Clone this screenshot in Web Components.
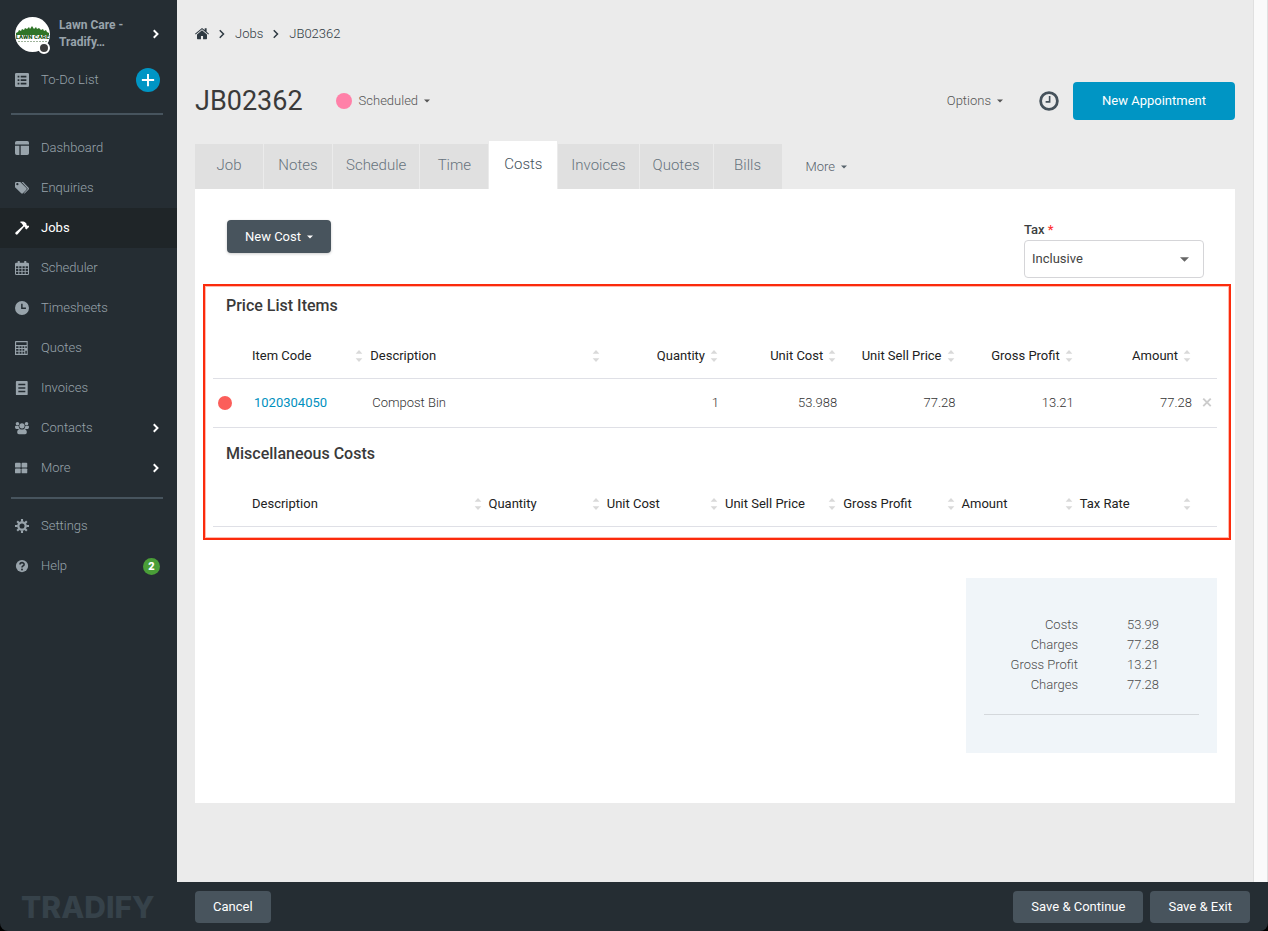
<!DOCTYPE html>
<html lang="en">
<head>
<meta charset="utf-8">
<meta name="viewport" content="width=device-width, initial-scale=1">
<title>JB02362 - Costs</title>
<style>
  html {
    background: #000;
  }

  body {
    margin: 0;
    font: 300 13px/20px Roboto, sans-serif;
    color: #3c3f41;
  }
</style>
</head>
<body>

<app-shell>
  <side-nav slot="nav">
    <account-card slot="account" name="Lawn Care - Tradify…"></account-card>
    <nav-item slot="todo" icon="list" add>To-Do List</nav-item>

    <nav-item icon="dashboard">Dashboard</nav-item>
    <nav-item icon="tags">Enquiries</nav-item>
    <nav-item icon="hammer" active>Jobs</nav-item>
    <nav-item icon="calendar">Scheduler</nav-item>
    <nav-item icon="clock">Timesheets</nav-item>
    <nav-item icon="calculator">Quotes</nav-item>
    <nav-item icon="invoice">Invoices</nav-item>
    <nav-item icon="people" expandable>Contacts</nav-item>
    <nav-item icon="tiles" expandable>More</nav-item>

    <nav-item slot="support" icon="gear">Settings</nav-item>
    <nav-item slot="support" icon="help" badge="2">Help</nav-item>
  </side-nav>

  <bread-crumbs><a href="#jobs">Jobs</a><a href="#JB02362">JB02362</a></bread-crumbs>

  <job-header status="Scheduled">JB02362</job-header>

  <tab-bar tabs="Job,Notes,Schedule,Time,Costs,Invoices,Quotes,Bills" selected="Costs"></tab-bar>

  <costs-panel>
    <cost-table id="price-list"></cost-table>
    <cost-table id="misc-costs"></cost-table>
    <totals-box slot="totals"></totals-box>
  </costs-panel>

  <action-bar slot="footer">
    <app-button>Cancel</app-button>
    <app-button slot="end">Save &amp; Continue</app-button>
    <app-button slot="end">Save &amp; Exit</app-button>
  </action-bar>
</app-shell>

<script>
// All icons share a 16x16 box and take the text colour.
const ICONS = {
  list: `<path fill-rule="evenodd" d="M1.500 0h13A1.500 1.500 0 0 1 16 1.500v13a1.500 1.500 0 0 1-1.500 1.500h-13A1.500 1.500 0 0 1 0 14.500v-13A1.500 1.500 0 0 1 1.500 0zM3 3v2h2V3zm3.500 0v2H13V3zM3 7v2h2V7zm3.500 0v2H13V7zM3 11v2h2v-2zm3.500 0v2H13v-2z"/>`,
  dashboard: `<path d="M2 0h12a2 2 0 0 1 2 2v2H0V2a2 2 0 0 1 2-2zM0 5.500h5V16H2a2 2 0 0 1-2-2zM6.500 5.500H16V14a2 2 0 0 1-2 2H6.500z"/>`,
  tags: `<path fill-rule="evenodd" d="M0 2.500C0 1.700.7 1 1.500 1H6l7 7c.6.600.6 1.300 0 1.900L9 14c-.6.600-1.300.6-1.900 0L0 7zm2.700-.2a1.300 1.300 0 1 0 0 2.600 1.300 1.300 0 0 0 0-2.600z"/><path d="M7.500 1h1.700l6.400 6.800c.5.600.5 1.300 0 1.900L11.300 14c-.5.500-1 .5-1.500.2l4.500-4.700c.3-.3.3-.7 0-1z"/>`,
  hammer: `<path d="M5.500 1.200C8 .2 10.700.6 12.400 2.300l.8.900-.1 1.400 1 .9 1.900-.2v1.600l-3 2.900-1.300-1.300v-1L10.500 6.400 3 15.100c-.6.700-1.400.7-2 .1l-.3-.3c-.6-.6-.6-1.400.1-2L9.300 5.300C8.500 3.500 7.300 2.100 5.500 1.200z"/>`,
  calendar: `<path fill-rule="evenodd" d="M3 2V1a1 1 0 0 1 2.500 0v1h5V1A1 1 0 0 1 13 1v1h1.500A1.500 1.500 0 0 1 16 3.500v11a1.500 1.500 0 0 1-1.500 1.500h-13A1.500 1.500 0 0 1 0 14.500v-11A1.500 1.500 0 0 1 1.500 2zM1.200 6v2.200h2.600V6zm3.700 0v2.200h2.500V6zm3.700 0v2.200h2.500V6zm3.600 0v2.200h2.600V6zm-11 3.200v2.200h2.600V9.200zm3.700 0v2.200h2.500V9.200zm3.700 0v2.200h2.500V9.200zm3.600 0v2.200h2.600V9.200zm-11 3.200v2.400h2.600v-2.400zm3.700 0v2.400h2.500v-2.400zm3.700 0v2.400h2.500v-2.400zm3.600 0v2.400h2.600v-2.400z"/>`,
  clock: `<path fill-rule="evenodd" d="M8 0a8 8 0 1 1 0 16A8 8 0 0 1 8 0zM7 3v6h5.500V7.400H8.700V3z"/>`,
  calculator: `<path fill-rule="evenodd" d="M1 0h13.500v16H0V1a1 1 0 0 1 1-1zm.3 1.500v3h12v-3zm0 4.500v2H4V6zm3.900 0v2h2.200V6zm3.400 0v2h2V6zm3.200 0v2h1.700V6zM1.300 9.200v2H4v-2zm3.900 0v2h2.200v-2zm3.400 0v2h2v-2zm-7.300 3.200v2.200H4v-2.200zm3.900 0v2.200h2.200v-2.200zm3.400 0v2.200h2v-2.200zm3.200-1.200v3.400h1.700v-3.400z"/>`,
  invoice: `<path fill-rule="evenodd" d="M2 0h11.500A1 1 0 0 1 14.500 1v14a1 1 0 0 1-1 1H2a1 1 0 0 1-1-1V1a1 1 0 0 1 1-1zm1.800 3v1.800h8V3zm0 4v1.800h8V7zm0 4v1.800h8V11z"/>`,
  people: `<circle cx="2.800" cy="3" r="2"/><circle cx="13.200" cy="3" r="2"/><circle cx="8" cy="5.500" r="3"/><path d="M0 6.500C0 5.700 1 5.300 1.700 5.500c.8.300 1.600.3 2.500 0 0 1.500.5 2.700 1.300 3.500H1.500C.5 9 0 8 0 6.500zM16 6.500c0-.8-1-1.200-1.700-1-.8.300-1.600.3-2.500 0 0 1.500-.5 2.700-1.300 3.500h4c1 0 1.500-1 1.500-2.500zM2.500 12.500C2.500 10.500 4 9 5.500 9c1.500 1 3.500 1 5 0 1.500 0 3 1.500 3 3.500 0 1.700-.8 2.500-2 2.500h-7c-1.200 0-2-.8-2-2.500z"/>`,
  tiles: `<rect y="2" width="6.500" height="5.500" rx="1"/><rect x="7.500" y="2" width="6.500" height="5.500" rx="1"/><rect y="8.500" width="6.500" height="5.500" rx="1"/><rect x="7.500" y="8.500" width="6.500" height="5.500" rx="1"/>`,
  gear: `<circle cx="8" cy="8" r="4.200" fill="none" stroke="currentColor" stroke-width="2.600"/><path stroke="currentColor" stroke-width="2.400" d="M8 0v3M8 13v3M0 8h3M13 8h3M2.500 2.500l2 2M11.500 11.500l2 2M13.500 2.500l-2 2M4.500 11.500l-2 2"/>`,
  help: `<circle cx="8" cy="8" r="7"/><path d="M5.700 6.300C5.700 3.500 10.400 3.400 10.400 6.200 10.400 8 8 7.900 8 9.700" fill="none" stroke="#252d33" stroke-width="1.800"/><circle cx="8" cy="11.900" r="1.100" fill="#252d33"/>`,
  home: `<path d="M8 1 0 7.700l.8.900L8 2.700l7.200 5.900.8-.9-2.700-2.300V1.500h-2.200v2z"/><path d="M8 3.800 2.300 8.500v4.700a.7.700 0 0 0 .7.700h3.800v-3.700h2.400v3.700H13a.7.700 0 0 0 .7-.7V8.500z"/>`,
  chevron: `<path d="m5 3 5 5-5 5" fill="none" stroke="currentColor" stroke-width="2.600"/>`,
  angle: `<path d="m5 3 5 5-5 5" fill="none" stroke="currentColor" stroke-width="2"/>`,
  plus: `<path d="M8 1v14M1 8h14" fill="none" stroke="currentColor" stroke-width="2.200"/>`,
  history: `<circle cx="8" cy="8" r="6.700" fill="none" stroke="currentColor" stroke-width="2.200"/><path d="M8.500 4v4.700H5.300" fill="none" stroke="currentColor" stroke-width="1.300"/>`,
  caret: `<path d="M0 4h16L8 12z"/>`,
  cross: `<path d="m2 1 12 12M14 1 2 13" fill="none" stroke="currentColor" stroke-width="3"/>`,
  sort: `<path d="M8 0l4.500 5h-9zM3.500 11h9L8 16z"/>`,
};

class ShadowElement extends HTMLElement {
  connectedCallback() {
    if (this.shadowRoot) return;
    this.attachShadow({ mode: 'open' }).innerHTML = this.render();
  }
}

class AppIcon extends ShadowElement {
  render() {
    const size = this.getAttribute('size') || 14;
    return `
      <style>
        :host { display: inline-flex; flex: none; }
        svg { display: block; fill: currentColor; }
      </style>
      <svg width="${size}" height="${size}" viewBox="0 0 16 16" aria-hidden="true">${ICONS[this.getAttribute('name')]}</svg>
    `;
  }
}

class AppShell extends ShadowElement {
  render() {
    return `
      <style>
        :host {
          display: grid;
          grid-template: minmax(0, 1fr) auto / 177px minmax(0, 1fr);
          height: 100vh;
          background: #252d33;
          border-radius: 0 0 8px 8px;
          overflow: hidden;
        }
        slot[name="nav"] { display: contents; }
        ::slotted(side-nav) { grid-row: 1 / 3; }
        .content { display: flex; min-width: 0; }
        main {
          flex: 1;
          box-sizing: border-box;
          min-width: 0;
          padding: 24px 18px 0;
          background: #ebebeb;
          overflow: hidden;
        }
        .scroll-track {
          width: 13px;
          background: #fafafa;
          border: solid #e0e0e0;
          border-width: 0 1px;
        }
      </style>
      <slot name="nav"></slot>
      <div class="content">
        <main><slot></slot></main>
        <div class="scroll-track"></div>
      </div>
      <slot name="footer"></slot>
    `;
  }
}

class SideNav extends ShadowElement {
  render() {
    return `
      <style>
        :host { display: flex; flex-direction: column; color: #98a3ab; }
        nav { flex: 1; padding-top: 8px; }
        hr { margin: 13px 14px 13px 11px; border: 0; height: 2px; background: #47545e; }
        .lower { margin: 9px 14px 7px 11px; }
        .brand {
          padding: 0 21px 8px;
          font: 800 30px/32px Inter, sans-serif;
          color: #36424a;
        }
      </style>
      <nav aria-label="Main">
        <slot name="account"></slot>
        <slot name="todo"></slot>
        <hr>
        <slot></slot>
        <hr class="lower">
        <slot name="support"></slot>
      </nav>
      <div class="brand">TRADIFY</div>
    `;
  }
}

class AccountCard extends ShadowElement {
  render() {
    return `
      <style>
        :host { display: block; }
        a {
          display: flex;
          align-items: center;
          height: 52px;
          padding: 0 15px;
          color: inherit;
          text-decoration: none;
          font: 700 12px/17px Roboto, sans-serif;
        }
        .avatar { position: relative; width: 35px; height: 35px; margin-right: 9px; }
        .avatar svg { display: block; }
        .presence {
          position: absolute;
          right: 0;
          bottom: -2px;
          width: 8px;
          height: 8px;
          border: 2px solid #fff;
          border-radius: 50%;
          background: #3d3d3d;
        }
        .name { flex: 1; max-width: 76px; }
        app-icon { margin-left: auto; color: #fff; }
      </style>
      <a href="#account">
        <span class="avatar">
          <svg width="35" height="35" viewBox="0 0 35 35">
            <clipPath id="round"><circle cx="17.500" cy="17.500" r="17.500"/></clipPath>
            <g clip-path="url(#round)">
              <rect width="35" height="35" fill="#fff"/>
              <path fill="#2f7427" d="M1 18v-2l2-1 1-2 2 1 1-2 2 1 1-2 2 1 2-2 1 2 2-3 2 3 2-2 1 2 2-1 2 2 2-1 1 2 2-1 1 2 2 1v2z"/>
              <text x="17.500" y="22" text-anchor="middle" font-family="Roboto, sans-serif" font-size="6" font-weight="900" fill="#1f5a20">LAWN CARE</text>
              <path stroke="#9fb39b" stroke-dasharray="2 1" d="M3 24.500h30"/>
            </g>
          </svg>
          <span class="presence"></span>
        </span>
        <span class="name">${this.getAttribute('name')}</span>
        <app-icon name="chevron" size="12"></app-icon>
      </a>
    `;
  }
}

class NavItem extends ShadowElement {
  trailing() {
    if (this.hasAttribute('add')) {
      return `<button aria-label="Add task"><app-icon name="plus" size="14"></app-icon></button>`;
    }
    if (this.hasAttribute('badge')) {
      return `<span class="badge">${this.getAttribute('badge')}</span>`;
    }
    if (this.hasAttribute('expandable')) {
      return `<app-icon class="more" name="chevron" size="12"></app-icon>`;
    }
    return '';
  }

  render() {
    return `
      <style>
        :host { display: flex; align-items: center; height: 40px; padding-right: 17px; }
        :host([active]) { background: #1f2528; color: #fff; font-weight: 400; }
        :host([expandable]) { padding-right: 15px; }
        a {
          display: flex;
          flex: 1;
          align-items: center;
          gap: 12px;
          padding-left: 15px;
          color: inherit;
          text-decoration: none;
        }
        .more { color: #fff; }
        button {
          display: grid;
          place-items: center;
          width: 24px;
          height: 24px;
          padding: 0;
          border: 0;
          border-radius: 50%;
          background: #0095c4;
          color: #fff;
        }
        .badge {
          width: 17px;
          border-radius: 50%;
          background: #4a9e38;
          color: #fff;
          font: 900 11px/17px Roboto, sans-serif;
          text-align: center;
        }
      </style>
      <a href="#"><app-icon name="${this.getAttribute('icon')}"></app-icon><slot></slot></a>
      ${this.trailing()}
    `;
  }
}

class BreadCrumbs extends ShadowElement {
  render() {
    const links = [...this.querySelectorAll('a')].map(a =>
      `<app-icon name="angle" size="12"></app-icon><a href="${a.getAttribute('href')}">${a.textContent}</a>`
    ).join('');

    return `
      <style>
        :host { display: block; color: #2f3a42; }
        nav { display: flex; align-items: center; gap: 7px; }
        a { color: inherit; text-decoration: none; }
        .home { display: flex; }
      </style>
      <nav aria-label="Breadcrumb">
        <a class="home" href="#home" aria-label="Home"><app-icon name="home" size="14"></app-icon></a>
        ${links}
      </nav>
    `;
  }
}

class MenuButton extends ShadowElement {
  render() {
    return `
      <style>
        :host { display: inline-flex; }
        button {
          display: flex;
          align-items: center;
          gap: 6px;
          padding: 0;
          border: 0;
          background: none;
          color: inherit;
          font: inherit;
        }
      </style>
      <button aria-haspopup="menu"><slot></slot><app-icon name="caret" size="6"></app-icon></button>
    `;
  }
}

class AppButton extends ShadowElement {
  render() {
    return `
      <style>
        :host { display: inline-flex; }
        button {
          display: flex;
          align-items: center;
          height: 32px;
          padding: 0 18px;
          border: 0;
          border-radius: 4px;
          background: #48545d;
          color: #fff;
          font: 400 13px/20px Roboto, sans-serif;
        }
        :host([primary]) button { height: 38px; padding: 0 29px; background: #0095c4; }
        :host([menu]) button {
          gap: 6px;
          height: 33px;
          box-shadow: 0 1px 3px rgba(0, 0, 0, .2);
        }
      </style>
      <button>
        <slot></slot>
        ${this.hasAttribute('menu') ? '<app-icon name="caret" size="6"></app-icon>' : ''}
      </button>
    `;
  }
}

class JobHeader extends ShadowElement {
  render() {
    return `
      <style>
        :host {
          display: flex;
          align-items: center;
          height: 38px;
          margin: 38px 0 21px;
          color: #555;
        }
        h1 { margin: 0 33px 0 0; font: 400 27px/38px Roboto, sans-serif; color: #3a3a3a; }
        .dot { width: 16px; height: 16px; margin-right: 7px; border-radius: 50%; background: #ff80a8; }
        .history {
          display: flex;
          margin: 0 14px 0 36px;
          padding: 0;
          border: 0;
          background: none;
          color: #46525b;
        }
        .options { margin-left: auto; }
      </style>
      <h1><slot></slot></h1>
      <span class="dot"></span>
      <menu-button>${this.getAttribute('status')}</menu-button>
      <menu-button class="options">Options</menu-button>
      <button class="history" aria-label="History"><app-icon name="history" size="20"></app-icon></button>
      <app-button primary>New Appointment</app-button>
    `;
  }
}

class TabBar extends ShadowElement {
  render() {
    const selected = this.getAttribute('selected');
    const tabs = this.getAttribute('tabs').split(',').map(name =>
      `<button role="tab" aria-selected="${name === selected}">${name}</button>`
    ).join('');

    return `
      <style>
        :host { display: flex; align-items: flex-end; height: 48px; color: #56626b; }
        [role="tablist"] { display: flex; align-items: flex-end; gap: 1px; }
        [role="tab"] {
          min-width: 68px;
          height: 45px;
          padding: 0 13px 3px;
          border: 0;
          background: #e0e0e0;
          color: #67737d;
          font: 300 15px/20px Roboto, sans-serif;
        }
        [aria-selected="true"] { height: 48px; background: #fff; color: #43515b; }
        menu-button { height: 45px; margin-left: 24px; }
      </style>
      <div role="tablist">${tabs}</div>
      <menu-button>More</menu-button>
    `;
  }
}

class CostsPanel extends ShadowElement {
  render() {
    return `
      <style>
        :host { display: block; padding: 31px 0 50px; background: #fff; }
        .toolbar {
          display: flex;
          align-items: flex-start;
          justify-content: space-between;
          padding: 0 31px 6px 32px;
        }
        .tax { width: 180px; }
        label { display: block; font-weight: 500; }
        .required { color: #f33; }
        .select { display: grid; align-items: center; }
        .select > * { grid-area: 1 / 1; }
        .select app-icon { justify-self: end; margin-right: 15px; color: #666; pointer-events: none; }
        select {
          appearance: none;
          width: 100%;
          height: 38px;
          padding: 0 7px;
          border: 1px solid #d5d5d8;
          border-radius: 4px;
          background: #fff;
          color: #444;
          font: inherit;
          font-weight: 400;
        }
        .tables {
          margin: 0 4px 0 8px;
          padding: 10px 12px 11px 8px;
          border: 2px solid #fb2b0c;
          outline: 1px solid #ffb9ae;
          outline-offset: -3px;
        }
        .totals { display: flex; justify-content: flex-end; padding: 38px 18px 0; }
      </style>
      <div class="toolbar">
        <app-button menu>New Cost</app-button>
        <div class="tax">
          <label for="tax">Tax <span class="required">*</span></label>
          <div class="select">
            <select id="tax"><option>Inclusive</option><option>Exclusive</option></select>
            <app-icon name="caret" size="9"></app-icon>
          </div>
        </div>
      </div>
      <div class="tables"><slot></slot></div>
      <div class="totals"><slot name="totals"></slot></div>
    `;
  }
}

const COST_TABLES = {
  'price-list': {
    title: 'Price List Items',
    columns: [
      { label: 'Item Code', key: 'code' },
      { label: 'Description', key: 'description', span: 2 },
      { label: 'Quantity', key: 'quantity', number: true },
      { label: 'Unit Cost', key: 'unitCost', number: true },
      { label: 'Unit Sell Price', key: 'sellPrice', number: true },
      { label: 'Gross Profit', key: 'profit', number: true },
      { label: 'Amount', key: 'amount', number: true },
    ],
    rows: [
      {
        code: '<a href="#1020304050">1020304050</a>',
        description: 'Compost Bin',
        quantity: '1',
        unitCost: '53.988',
        sellPrice: '77.28',
        profit: '13.21',
        amount: '77.28',
      },
    ],
  },
  'misc-costs': {
    title: 'Miscellaneous Costs',
    columns: [
      { label: 'Description', span: 2 },
      { label: 'Quantity' },
      { label: 'Unit Cost' },
      { label: 'Unit Sell Price' },
      { label: 'Gross Profit' },
      { label: 'Amount' },
      { label: 'Tax Rate' },
    ],
    rows: [],
  },
};

class CostTable extends ShadowElement {
  render() {
    const { title, columns, rows } = COST_TABLES[this.id];

    const header = columns.map(({ label, span = 1, number }) => `
      <th colspan="${span}" class="${number ? 'number' : ''}">
        <div><span>${label}</span><app-icon name="sort" size="12"></app-icon></div>
      </th>
    `).join('');

    const body = rows.map(row => `
      <tr>
        <td class="status"><span></span></td>
        ${columns.map(({ key, span = 1, number }) =>
          `<td colspan="${span}" class="${number ? 'number' : ''}">${row[key]}</td>`
        ).join('')}
        <td class="remove"><button aria-label="Remove"><app-icon name="cross" size="10"></app-icon></button></td>
      </tr>
    `).join('');

    // Descriptions span two of the eight equal columns.
    return `
      <style>
        :host { display: block; }
        :host(:not(:first-child)) { margin-top: 16px; }
        h2 { margin: 0 0 17px 13px; font: 500 16px/20px Roboto, sans-serif; color: #3a3a3a; }
        table { width: 100%; table-layout: fixed; border-collapse: collapse; }
        .edge-start { width: 35px; }
        .edge-end { width: 23px; }
        tr { border-bottom: 1px solid #dfe0e6; }
        th { height: 45px; padding: 0 1px 0 4px; text-align: left; font-weight: 400; color: #222; }
        th div { display: flex; align-items: center; justify-content: space-between; }
        th app-icon { color: #d9d9d9; }
        td { padding: 0 2px 0 6px; color: #333; }
        tbody td { height: 48px; }
        .number { text-align: right; }
        .number div { justify-content: flex-end; gap: 3px; }
        .status { padding: 0 0 0 5px; }
        .status span { display: block; width: 14px; height: 14px; border-radius: 50%; background: #fb5e5a; }
        .remove { padding: 0 5px 0 0; }
        .remove button { display: flex; margin-left: auto; padding: 0; border: 0; background: none; color: #ccc; }
        a { color: #0090be; font-weight: 400; text-decoration: none; }
      </style>
      <h2>${title}</h2>
      <table aria-label="${title}">
        <colgroup>
          <col class="edge-start">
          <col span="8">
          <col class="edge-end">
        </colgroup>
        <thead><tr><td></td>${header}<td></td></tr></thead>
        <tbody>${body}</tbody>
      </table>
    `;
  }
}

class TotalsBox extends ShadowElement {
  render() {
    const totals = [
      ['Costs', '53.99'],
      ['Charges', '77.28'],
      ['Gross Profit', '13.21'],
      ['Charges', '77.28'],
    ];

    return `
      <style>
        :host {
          display: block;
          box-sizing: border-box;
          width: 251px;
          padding: 37px 18px 38px;
          background: #f0f5f9;
          color: #4c4c4c;
        }
        table { width: 100%; border-collapse: collapse; }
        th, td { padding: 0; text-align: right; font-weight: 300; }
        th { width: 94px; }
        td { padding-right: 40px; }
        hr { margin: 19px 0 0; border: 0; height: 1px; background: #d4d8dc; }
      </style>
      <table aria-label="Totals">
        ${totals.map(([label, value]) => `<tr><th scope="row">${label}</th><td>${value}</td></tr>`).join('')}
      </table>
      <hr>
    `;
  }
}

class ActionBar extends ShadowElement {
  render() {
    return `
      <style>
        :host { display: flex; align-items: center; gap: 7px; height: 49px; padding: 0 18px; }
        .end { display: flex; gap: 7px; margin-left: auto; }
      </style>
      <slot></slot>
      <div class="end"><slot name="end"></slot></div>
    `;
  }
}

customElements.define('app-icon', AppIcon);
customElements.define('app-shell', AppShell);
customElements.define('side-nav', SideNav);
customElements.define('account-card', AccountCard);
customElements.define('nav-item', NavItem);
customElements.define('bread-crumbs', BreadCrumbs);
customElements.define('menu-button', MenuButton);
customElements.define('app-button', AppButton);
customElements.define('job-header', JobHeader);
customElements.define('tab-bar', TabBar);
customElements.define('costs-panel', CostsPanel);
customElements.define('cost-table', CostTable);
customElements.define('totals-box', TotalsBox);
customElements.define('action-bar', ActionBar);
</script>
</body>
</html>
